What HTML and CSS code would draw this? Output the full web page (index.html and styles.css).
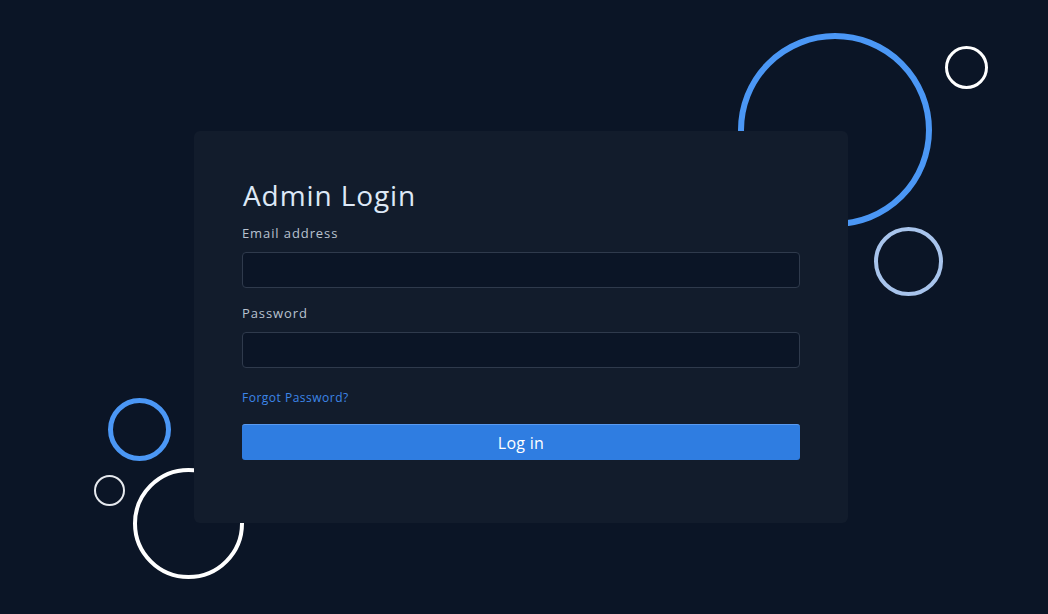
FILE: index.html
```html
<!DOCTYPE html>
<html lang="en">
<head>
<meta charset="utf-8">
<title>Admin Login</title>
<link rel="stylesheet" href="styles.css">
</head>
<body>
<div class="page">
  <div class="ring ring-big-blue"></div>
  <div class="ring ring-top-white"></div>
  <div class="ring ring-light-blue"></div>
  <div class="ring ring-left-blue"></div>
  <div class="ring ring-small-white"></div>
  <div class="ring ring-big-white"></div>

  <form class="card">
    <h1 class="title">Admin Login</h1>
    <div class="field">
      <label class="label" for="email">Email address</label>
      <input class="input" id="email" type="email">
    </div>
    <div class="field">
      <label class="label" for="password">Password</label>
      <input class="input" id="password" type="password">
    </div>
    <a class="forgot" href="#">Forgot Password?</a>
    <button class="btn" type="button">Log in</button>
  </form>
</div>
</body>
</html>
```

FILE: styles.css
```css
* { box-sizing: border-box; }

html, body {
  margin: 0;
  padding: 0;
  background: #0b1526;
}

body {
  font-family: "Open Sans", "Noto Sans", sans-serif;
  color: #dbe6f5;
}

.page {
  position: relative;
  width: 1048px;
  height: 614px;
  overflow: hidden;
  padding: 131px 0 0 194px;
}

.ring {
  position: absolute;
  border-radius: 50%;
  border-style: solid;
}

.ring-big-blue {
  left: 738px; top: 33px;
  width: 194px; height: 194px;
  border-width: 6px;
  border-color: #4b97f5;
}

.ring-top-white {
  left: 945px; top: 46px;
  width: 43px; height: 43px;
  border-width: 3px;
  border-color: #ffffff;
}

.ring-light-blue {
  left: 874px; top: 227px;
  width: 69px; height: 69px;
  border-width: 4px;
  border-color: #a8c4ec;
}

.ring-left-blue {
  left: 108px; top: 398px;
  width: 63px; height: 63px;
  border-width: 5px;
  border-color: #4b97f5;
}

.ring-small-white {
  left: 94px; top: 475px;
  width: 31px; height: 31px;
  border-width: 2px;
  border-color: #e6e9ee;
}

.ring-big-white {
  left: 133px; top: 468px;
  width: 111px; height: 111px;
  border-width: 4px;
  border-color: #ffffff;
}

.card {
  position: relative;
  z-index: 1;
  width: 654px;
  height: 392px;
  background: #121c2c;
  border-radius: 6px;
  padding: 44px 48px 0 48px;
  display: flex;
  flex-direction: column;
}

.title {
  margin: 0 0 9px 1px;
  font-size: 28px;
  line-height: 40px;
  font-weight: 500;
  color: #dde8f6;
  letter-spacing: 0.9px;
}

.field {
  display: flex;
  flex-direction: column;
  margin-bottom: 16px;
}

.label {
  font-size: 13px;
  line-height: 18px;
  color: #b8c2d0;
  margin-bottom: 10px;
  letter-spacing: 0.9px;
}

.input {
  height: 36px;
  width: 100%;
  background: #0b1526;
  border: 1px solid #2f3a4c;
  border-radius: 4px;
  color: #dbe6f5;
  font: inherit;
  padding: 0 12px;
  outline: none;
}

.forgot {
  margin-top: 5px;
  font-size: 12px;
  line-height: 18px;
  color: #3d86e8;
  text-decoration: none;
  letter-spacing: 0.5px;
  align-self: flex-start;
}

.btn {
  margin-top: 17px;
  height: 36px;
  width: 100%;
  background: #2f7de1;
  border: none;
  border-top: 1px solid #5a9af0;
  border-radius: 3px;
  color: #ffffff;
  font-family: inherit;
  font-size: 16px;
  font-weight: 500;
  letter-spacing: 0.3px;
  cursor: pointer;
}
```
